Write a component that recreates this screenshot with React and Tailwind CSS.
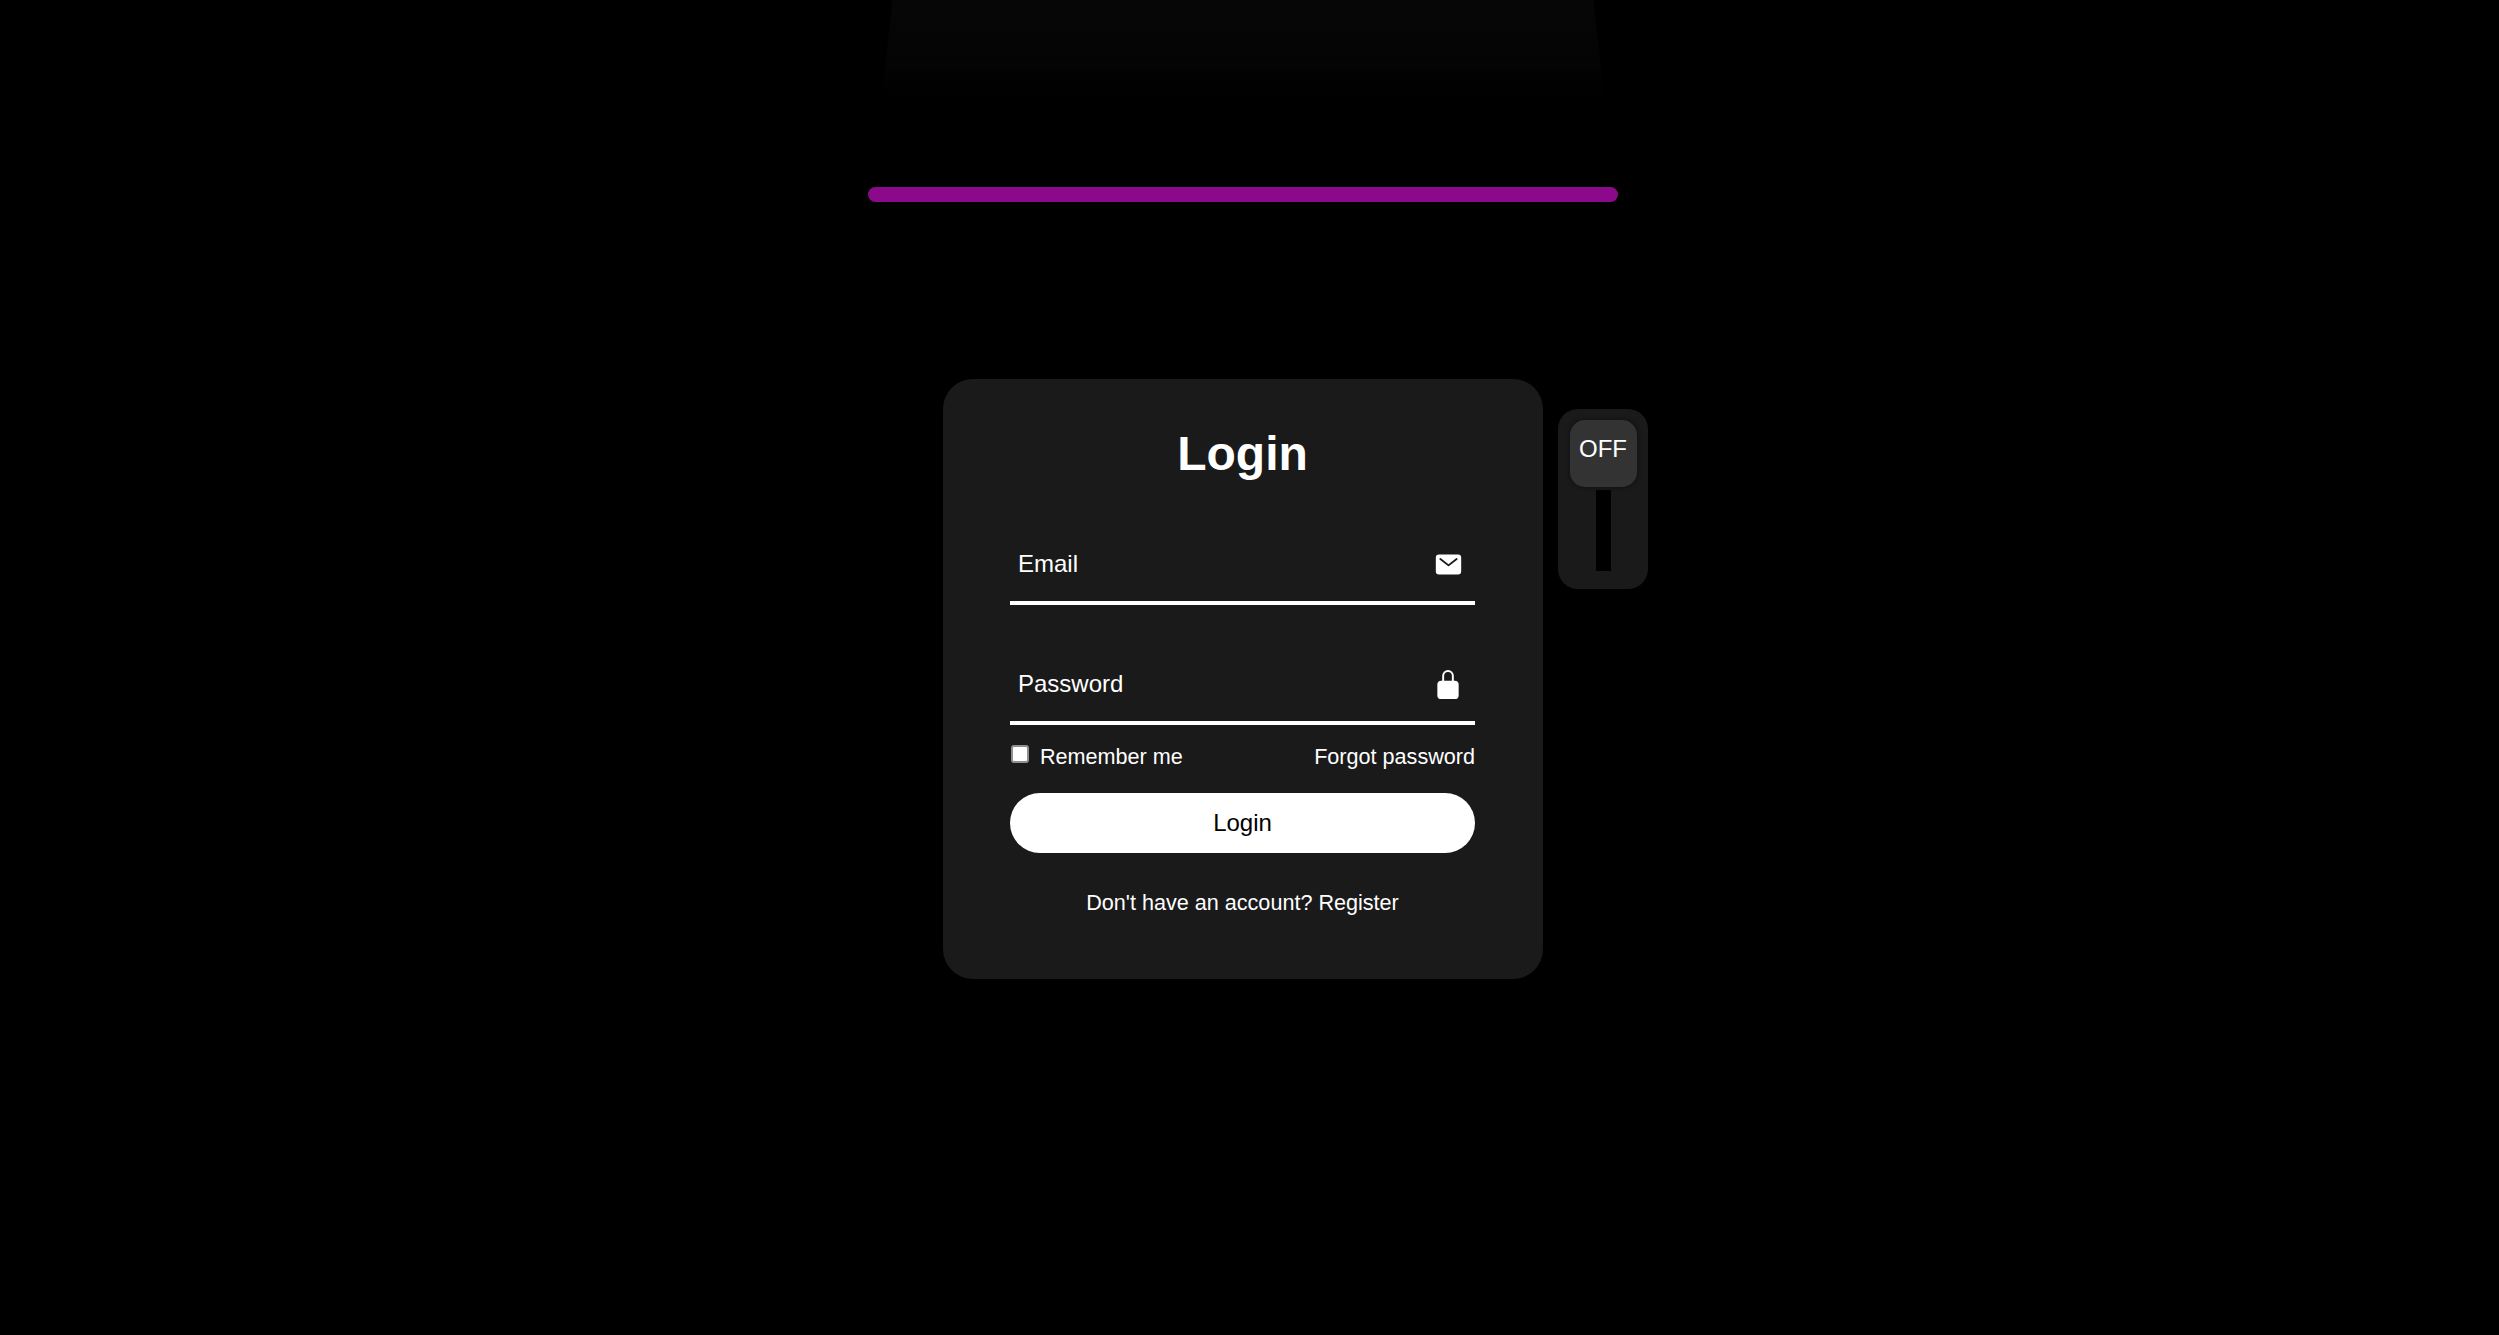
import React from "react";
import { IoMail, IoLockClosed } from "react-icons/io5";

function Field({ label, icon, iconInset }) {
  return (
    <div className={`flex h-[80px] items-center justify-between border-b-4 border-white pt-[2px] pl-[8px] text-[24px] ${iconInset}`}>
      <span>{label}</span>
      {icon}
    </div>
  );
}

export default function App() {
  return (
    <div className="relative h-screen overflow-hidden bg-black pr-[13px] font-['Liberation_Sans',Arial,sans-serif] text-white">
      {/* faint light beam behind the bar */}
      <div className="absolute top-0 left-[878px] h-[130px] w-[730px] bg-gradient-to-b from-[#060606] via-[#040404] to-black [clip-path:polygon(2%_0,98%_0,100%_100%,0_100%)]" />

      <div className="relative flex flex-col items-center pt-[187px]">
        <div className="h-[15px] w-[750px] rounded-[8px] bg-[#8b0a8b]" />

        <div className="mt-[177px] grid w-full grid-cols-[1fr_600px_1fr] gap-x-[15px]">
          <div />

          <div className="h-[600px] rounded-[30px] bg-[#1a1a1a] pt-[40px] pr-[68px] pl-[67px]">
            <h1 className="text-center text-[48px] leading-[70px] font-bold">Login</h1>

            <div className="mt-[36px] flex flex-col gap-[40px]">
              <Field label="Email" iconInset="pr-[12px]" icon={<IoMail className="h-[29px] w-[29px]" />} />
              <Field label="Password" iconInset="pr-[11px]" icon={<IoLockClosed className="mt-[1px] h-[31px] w-[32px]" />} />
            </div>

            <div className="mt-[17px] flex items-center justify-between text-[21.6px] leading-[30px]">
              <label className="flex items-center gap-[11px]">
                <input
                  type="checkbox"
                  className="mb-[6px] ml-[1px] h-[18px] w-[18px] appearance-none rounded-[3px] border-2 border-[#8f8f8f] bg-white"
                />
                Remember me
              </label>
              <span>Forgot password</span>
            </div>

            <button className="mt-[21px] block h-[60px] w-full rounded-full bg-white text-center text-[24px] text-black">
              Login
            </button>

            <p className="mt-[35px] text-center text-[21.6px] leading-[30px]">
              Don't have an account? Register
            </p>
          </div>

          <div className="mt-[30px] flex h-[180px] w-[90px] flex-col items-center rounded-[20px] bg-[#1a1a1a] pt-[11px]">
            <div className="z-10 flex h-[67px] w-[67px] justify-center rounded-[15px] bg-[#333] pt-[15px] text-[24px] leading-[28px] shadow-[0_0_3px_2px_#151515]">
              OFF
            </div>
            <div className="mt-[3px] h-[81px] w-[15px] bg-black" />
          </div>
        </div>
      </div>
    </div>
  );
}
